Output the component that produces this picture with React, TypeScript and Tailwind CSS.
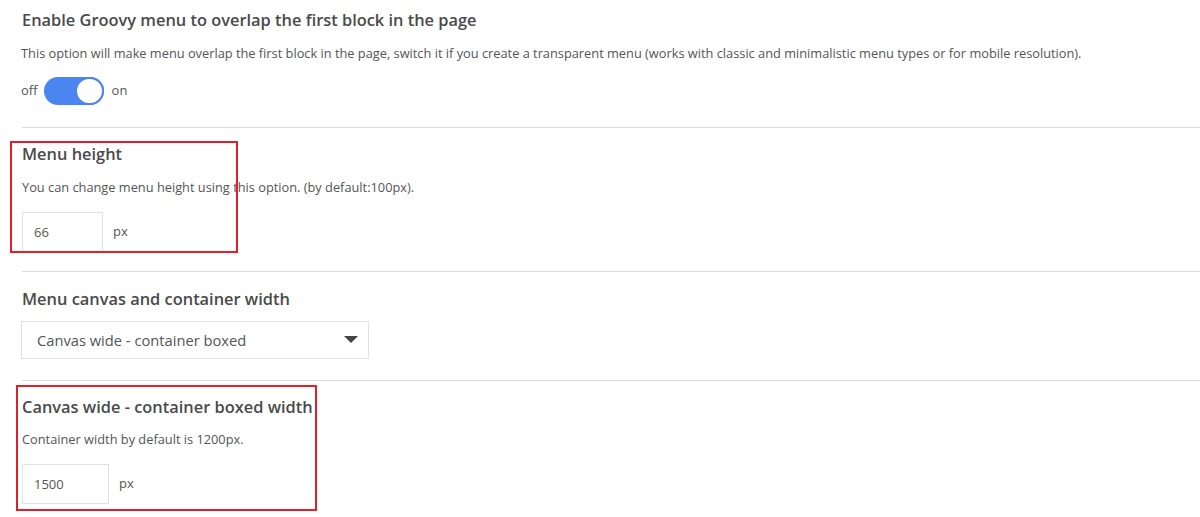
import { useState } from 'react';

const font = { fontFamily: '"Open Sans", "Noto Sans", sans-serif' };

function Toggle({ on, onChange }: { on: boolean; onChange: () => void }) {
    return (
        <div className="flex items-center gap-[6px] text-[13px] text-[#555]">
            <span>off</span>
            <button
                onClick={onChange}
                className={`relative w-[60px] h-[28px] rounded-full ${on ? 'bg-[#4a85f0]' : 'bg-[#ccc]'}`}
            >
                <span
                    className={`absolute top-0 w-[29px] h-[28px] rounded-full bg-white border-2 ${on ? 'right-0 border-[#4a85f0]' : 'left-0 border-[#ccc]'}`}
                />
            </button>
            <span className="ml-[2px]">on</span>
        </div>
    );
}

function NumberField({ value, width }: { value: string; width: string }) {
    return (
        <div className="flex items-center gap-[10px] mt-[15px]">
            <input
                defaultValue={value}
                className={`${width} h-[40px] border border-[#e1e1e1] pl-[11px] text-[13px] text-[#555] outline-none`}
            />
            <span className="text-[13px] text-[#555]">px</span>
        </div>
    );
}

export default function App() {
    const [overlap, setOverlap] = useState(true);

    return (
        <div className="relative w-[1200px] h-[517px] bg-white overflow-hidden" style={font}>
            <div className="pl-[22px]">
                {/* overlap */}
                <div className="pt-[8px] pb-[22px] border-b border-[#dcdcdc]">
                    <h3 className="text-[16.4px] leading-[24px] font-semibold text-[#4a4a4a]">
                        Enable Groovy menu to overlap the first block in the page
                    </h3>
                    <p className="mt-[11px] text-[12.8px] leading-[20px] text-[#555] -ml-[1px]">
                        This option will make menu overlap the first block in the page, switch it if you create a transparent menu (works with classic and minimalistic menu types or for mobile resolution).
                    </p>
                    <div className="mt-[14px] -ml-[1px]">
                        <Toggle on={overlap} onChange={() => setOverlap(!overlap)} />
                    </div>
                </div>

                {/* height */}
                <div className="pt-[14px] pb-[19px] border-b border-[#dcdcdc]">
                    <h3 className="text-[16.4px] leading-[24px] font-semibold text-[#4a4a4a]">Menu height</h3>
                    <p className="mt-[11px] text-[12.8px] leading-[20px] text-[#555]">
                        You can change menu height using this option. (by default:100px).
                    </p>
                    <NumberField value="66" width="w-[81px]" />
                </div>

                {/* canvas */}
                <div className="pt-[15px] pb-[21px] border-b border-[#dcdcdc]">
                    <h3 className="text-[16.4px] leading-[24px] font-semibold text-[#4a4a4a]">Menu canvas and container width</h3>
                    <div className="mt-[10px] w-[348px] h-[38px] border border-[#e1e1e1] flex items-center justify-between pl-[15px] pr-[10px] text-[14.7px] text-[#555] -ml-[1px]">
                        <span>Canvas wide - container boxed</span>
                        <svg width="14" height="8" viewBox="0 0 14 8">
                            <path d="M0 0 H14 L7 7 Z" fill="#444" />
                        </svg>
                    </div>
                </div>

                {/* boxed width */}
                <div className="pt-[14px]">
                    <h3 className="text-[16.4px] leading-[24px] font-semibold text-[#4a4a4a]">Canvas wide - container boxed width</h3>
                    <p className="mt-[10px] text-[12.8px] leading-[20px] text-[#555]">Container width by default is 1200px.</p>
                    <NumberField value="1500" width="w-[87px]" />
                </div>
            </div>

            {/* annotation boxes */}
            <div className="absolute left-[10px] top-[141px] w-[228px] h-[112px] border-2 border-[#e0202b] pointer-events-none" />
            <div className="absolute left-[16px] top-[385px] w-[301px] h-[126px] border-2 border-[#e0202b] pointer-events-none" />
        </div>
    );
}
